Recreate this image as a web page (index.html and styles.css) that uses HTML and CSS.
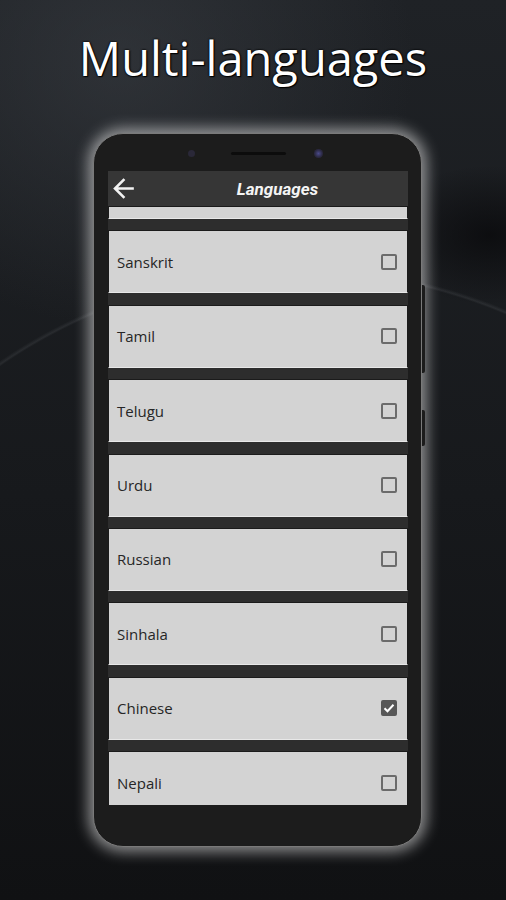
FILE: index.html
```html
<!DOCTYPE html>
<html lang="en">
<head>
    <meta charset="UTF-8">
    <meta name="viewport" content="width=device-width, initial-scale=1.0">
    <title>Multi-languages</title>
    <link rel="stylesheet" href="styles.css">
</head>
<body>
    <h1 class="headline">Multi-languages</h1>

    <div class="phone">
        <div class="side-key key-power"></div>
        <div class="side-key key-volume"></div>

        <div class="phone-top">
            <span class="sensor"></span>
            <span class="speaker"></span>
            <span class="camera"></span>
        </div>

        <div class="screen">
            <div class="toolbar">
                <svg class="back" viewBox="0 0 24 24" width="31" height="31">
                    <path fill="#f2f2f2" d="M20 11H7.83l5.59-5.59L12 4l-8 8 8 8 1.41-1.41L7.83 13H20v-2z"/>
                </svg>
                <div class="toolbar-title">Languages</div>
            </div>

            <div class="lang-list">
                <!-- scrolled past, only its bottom edge shows -->
                <div class="lang-item first"></div>
                <div class="lang-item">
                    <span class="lang-name">Sanskrit</span>
                    <span class="check"></span>
                </div>
                <div class="lang-item">
                    <span class="lang-name">Tamil</span>
                    <span class="check"></span>
                </div>
                <div class="lang-item">
                    <span class="lang-name">Telugu</span>
                    <span class="check"></span>
                </div>
                <div class="lang-item">
                    <span class="lang-name">Urdu</span>
                    <span class="check"></span>
                </div>
                <div class="lang-item">
                    <span class="lang-name">Russian</span>
                    <span class="check"></span>
                </div>
                <div class="lang-item">
                    <span class="lang-name">Sinhala</span>
                    <span class="check"></span>
                </div>
                <div class="lang-item">
                    <span class="lang-name">Chinese</span>
                    <span class="check checked">
                        <svg viewBox="0 0 16 16" width="16" height="16">
                            <path d="M3.5 8.2l3 3 6-6.4" fill="none" stroke="#fff" stroke-width="2"/>
                        </svg>
                    </span>
                </div>
                <div class="lang-item">
                    <span class="lang-name">Nepali</span>
                    <span class="check"></span>
                </div>
            </div>
        </div>
    </div>
</body>
</html>
```

FILE: styles.css
```css
html {
    overflow: hidden;
}
body {
    margin: 0;
    width: 506px;
    height: 900px;
    overflow: hidden;
    font-family: "Open Sans", "Noto Sans", sans-serif;
    background:
        radial-gradient(circle 530px at 300px 800px, rgba(120,124,130,0) 527px, rgba(120,124,130,0.16) 529px, rgba(120,124,130,0) 532px),
        radial-gradient(ellipse 110px 70px at 490px 235px, rgba(8,8,10,0.75), rgba(8,8,10,0) 100%),
        radial-gradient(ellipse 420px 380px at 120px 60px, rgba(60,64,70,0.55), rgba(60,64,70,0) 70%),
        linear-gradient(180deg, #1f2226 0%, #17191c 55%, #101113 100%);
}
.headline {
    margin: 0;
    padding-top: 28px;
    height: 60px;
    line-height: 60px;
    text-align: center;
    font-size: 47px;
    font-weight: 400;
    color: #fff;
    text-shadow: 0 0 2px #000, 0 0 2px #000, 1px 1px 1px #000;
}
.phone {
    position: relative;
    box-sizing: border-box;
    width: 329px;
    height: 714px;
    margin: 45px 0 0 93px;
    padding: 37px 15px 43px 14px;
    background: #1c1c1c;
    border: 1px solid #7a7a7a;
    border-radius: 30px;
    box-shadow: 0 0 14px 5px rgba(235,235,235,0.55);
}
.side-key {
    position: absolute;
    right: -4px;
    width: 3px;
    background: #1c1c1c;
    border-radius: 0 2px 2px 0;
}
.key-power {
    top: 151px;
    height: 88px;
}
.key-volume {
    top: 276px;
    height: 36px;
}
.phone-top {
    position: absolute;
    top: 15px;
    left: 94px;
    width: 140px;
    height: 10px;
}
.sensor, .camera {
    position: absolute;
    top: 1px;
    width: 7px;
    height: 7px;
    border-radius: 50%;
    background: #2a2838;
}
.sensor {
    left: 0;
}
.camera {
    left: 126px;
    width: 9px;
    height: 9px;
    top: 0;
    background: radial-gradient(circle, #4a4a8a 0%, #2a2840 60%);
}
.speaker {
    position: absolute;
    left: 43px;
    top: 3px;
    width: 55px;
    height: 3px;
    border-radius: 2px;
    background: #0c0c0c;
}
.screen {
    height: 634px;
    width: 300px;
    overflow: hidden;
    background: #2d2d2d;
    display: flex;
    flex-direction: column;
}
.toolbar {
    flex: none;
    height: 35px;
    display: flex;
    align-items: center;
    background: #363636;
    border-bottom: 1px solid #1a1a1a;
}
.back {
    flex: none;
    display: block;
}
.toolbar-title {
    flex: 1;
    text-align: center;
    padding-left: 8px;
    font-family: Roboto, sans-serif;
    font-style: italic;
    font-weight: 700;
    font-size: 17px;
    color: #f4f4f4;
}
.lang-list {
    flex: 1;
    overflow: hidden;
}
.lang-item {
    box-sizing: border-box;
    height: 63px;
    margin-bottom: 11.4px;
    display: flex;
    align-items: center;
    justify-content: space-between;
    padding: 0 10px 0 8px;
    background: #d3d3d3;
    border: 1px solid #1b1b1b;
    border-bottom-color: #e8e8e8;
}
.lang-item.first {
    margin-top: -51px;
}
.lang-name {
    font-size: 15px;
    color: #262626;
}
.check {
    box-sizing: border-box;
    width: 16px;
    height: 16px;
    border: 2px solid #6b6b6b;
    border-radius: 2px;
}
.check.checked {
    background: #575757;
    border-color: #575757;
    position: relative;
}
.check.checked svg {
    position: absolute;
    left: -2px;
    top: -2px;
}
```
